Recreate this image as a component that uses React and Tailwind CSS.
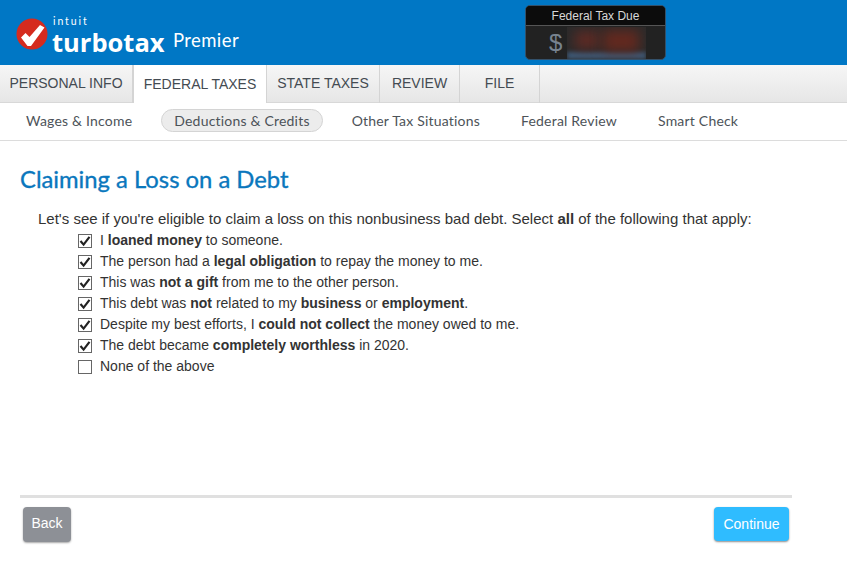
const tabs = [
  { label: "PERSONAL INFO", width: "w-[133px]" },
  { label: "FEDERAL TAXES", width: "w-[134px]", active: true },
  { label: "STATE TAXES", width: "w-[113px]" },
  { label: "REVIEW", width: "w-[80px]" },
  { label: "FILE", width: "w-[80px]" },
];

const subTabs = [
  { label: "Wages & Income" },
  { label: "Deductions & Credits", active: true },
  { label: "Other Tax Situations" },
  { label: "Federal Review" },
  { label: "Smart Check" },
];

const items = [
  { checked: true, text: <>I <b>loaned money</b> to someone.</> },
  { checked: true, text: <>The person had a <b>legal obligation</b> to repay the money to me.</> },
  { checked: true, text: <>This was <b>not a gift</b> from me to the other person.</> },
  { checked: true, text: <>This debt was <b>not</b> related to my <b>business</b> or <b>employment</b>.</> },
  { checked: true, text: <>Despite my best efforts, I <b>could not collect</b> the money owed to me.</> },
  { checked: true, text: <>The debt became <b>completely worthless</b> in 2020.</> },
  { checked: false, text: <>None of the above</> },
];

function Logo() {
  return (
    <div className="flex items-start pt-[16px] pl-[16px]">
      <svg width="32" height="32" viewBox="0 0 32 32" className="mt-[2px]">
        <circle cx="16" cy="16" r="15.5" fill="#d52b1e" />
        <path d="M5 19.5 L9.5 15 L13.5 19 L24 7 L28.5 9.5 L15 28 L11.5 28 Z" fill="#fff" />
      </svg>
      <div className="relative ml-[3px] h-[40px] w-[190px] text-white">
        <span className="absolute left-[1px] top-[14px] font-['Open_Sans',sans-serif] text-[25.5px] font-bold leading-[24px]">
          turbotax
        </span>
        <span className="absolute left-[2px] top-[0px] font-['Lato',sans-serif] text-[10.5px] leading-[10px] tracking-[1.9px]">
          intuit
        </span>
        <span className="absolute left-[122px] top-[13px] font-['Lato',sans-serif] text-[18.5px] leading-[22px] tracking-[0.4px]">
          Premier
        </span>
      </div>
    </div>
  );
}

function TaxDue() {
  return (
    <div className="mt-[5px] ml-[269px] h-[55px] w-[141px] overflow-hidden rounded-[5px] border border-[#33516b] bg-[#222]">
      <div className="h-[20px] border-b border-[#555] bg-[#0c0c0c] text-center text-[12px] leading-[20px] text-[#d8d8d8]">
        Federal Tax Due
      </div>
      <div className="flex h-[33px] items-center pl-[23px]">
        <span className="text-[24px] leading-[24px] text-[#77838f]">$</span>
        <div className="relative ml-[5px] mt-[1px] h-[32px] w-[79px] overflow-hidden bg-[#2b2a2a]">
          <div className="absolute bottom-0 left-0 right-0 h-[7px] bg-[#3d5a78] blur-[2px]" />
          <div className="absolute left-[8px] top-[4px] h-[18px] w-[24px] bg-[#5c2a24] blur-[6px]" />
          <div className="absolute left-[36px] top-[3px] h-[22px] w-[36px] bg-[#62291f] blur-[6px]" />
        </div>
      </div>
    </div>
  );
}

function CheckBox({ checked }) {
  return (
    <span className="flex h-[14px] w-[14px] shrink-0 items-center justify-center border border-[#666] bg-white">
      {checked && (
        <svg width="12" height="12" viewBox="0 0 12 12">
          <path d="M1.5 6 L4.6 9.6 L10.5 1.8" fill="none" stroke="#222" strokeWidth="2.2" />
        </svg>
      )}
    </span>
  );
}

export default function App() {
  return (
    <div className="min-h-[572px] bg-white font-['Liberation_Sans',Arial,sans-serif]">
      <header className="flex h-[65px] bg-[#0077c5]">
        <div className="w-[256px]">
          <Logo />
        </div>
        <TaxDue />
      </header>

      <nav className="flex h-[38px] border-b border-[#d8d8d8] bg-gradient-to-b from-[#f6f6f6] to-[#e6e6e6]">
        {tabs.map((t) => (
          <div
            key={t.label}
            className={`${t.width} h-[38px] border-r border-[#d4d4d4] text-center text-[14px] text-[#444b52] ${
              t.active ? "border-l bg-white pt-[1px] leading-[37px]" : "leading-[36px]"
            }`}
          >
            {t.label}
          </div>
        ))}
      </nav>

      <nav className="flex h-[38px] items-center gap-[41px] border-b border-[#dcdcdc] pb-[2px] pl-[26px] font-['Lato',sans-serif] text-[14px] tracking-[0.2px] text-[#4d5359]">
        {subTabs.map((t) => (
          <div
            key={t.label}
            className={
              t.active
                ? "-mx-[12px] flex h-[23px] items-center rounded-full border border-[#d4d4d4] bg-[#ececec] px-[12px]"
                : ""
            }
          >
            {t.label}
          </div>
        ))}
      </nav>

      <main className="px-[20px]">
        <h1 className="pt-[24px] font-['Lato',sans-serif] text-[23.8px] font-normal leading-[28px] text-[#0a77bd] [-webkit-text-stroke:0.35px_#0a77bd]">
          Claiming a Loss on a Debt
        </h1>
        <p className="pl-[18px] pt-[15px] text-[15px] leading-[21px] text-[#333]">
          Let's see if you're eligible to claim a loss on this nonbusiness bad debt. Select <b>all</b> of the following
          that apply:
        </p>
        <ul className="mt-[1px] text-[14px] leading-[21px] text-[#333]">
          {items.map((item, i) => (
            <li key={i} className="flex h-[21px] items-center gap-[8px] pl-[58px]">
              <CheckBox checked={item.checked} />
              <span>{item.text}</span>
            </li>
          ))}
        </ul>

        <div className="mt-[118px] h-[3px] w-[772px] bg-[#e0e0e0]" />
        <div className="flex w-[769px] justify-between pl-[3px] pt-[9px]">
          <button className="h-[35px] w-[48px] rounded-[4px] bg-[#8d9096] pb-[3px] text-[14px] text-white shadow-[0_1px_2px_rgba(0,0,0,0.35)]">
            Back
          </button>
          <button className="h-[34px] w-[75px] rounded-[4px] bg-[#2fbcff] text-[14px] text-white shadow-[0_1px_2px_rgba(0,0,0,0.45)]">
            Continue
          </button>
        </div>
      </main>
    </div>
  );
}
